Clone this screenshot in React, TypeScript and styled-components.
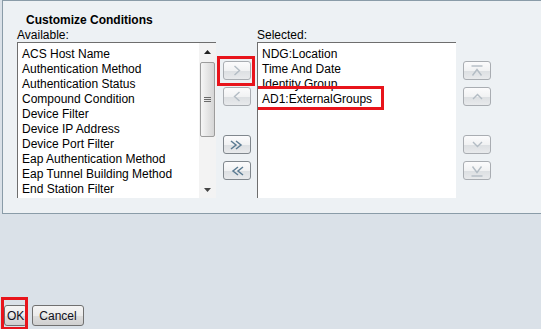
import styled, { createGlobalStyle } from 'styled-components';

const GlobalStyle = createGlobalStyle`
  html, body {
    margin: 0;
    padding: 0;
    background: #dae1e8;
  }
  body {
    width: 541px;
    height: 329px;
    overflow: hidden;
    font-family: 'Liberation Sans', Arial, sans-serif;
    font-size: 12px;
    color: #000;
  }
`;

const Page = styled.div`
  height: 329px;
  padding-left: 2px;
  box-sizing: border-box;
  display: flex;
  flex-direction: column;
`;

const Panel = styled.section`
  height: 214px;
  box-sizing: border-box;
  border: 1px solid #8a9ca8;
  border-right: none;
  background: #edf1f4;
  padding: 12px 0 0 14px;
`;

const Titulo = styled.h3`
  margin: 0 0 2px 9px;
  font-size: 12px;
  line-height: 14px;
  font-weight: 700;
`;

const Colunas = styled.div`
  display: flex;
  align-items: flex-start;
`;

const Coluna = styled.div`
  width: 199px;
  display: flex;
  flex-direction: column;
`;

const Rotulo = styled.div`
  line-height: 13px;
  height: 13px;
`;

const Lista = styled.div`
  height: 156px;
  box-sizing: border-box;
  background: #fff;
  border-top: 1px solid #6e6e6e;
  border-left: 1px solid #6e6e6e;
  display: flex;
`;

const Itens = styled.div`
  flex: 1;
  padding: 4px 0 0 4px;
  overflow: hidden;
`;

const Item = styled.div`
  line-height: 15px;
  white-space: nowrap;
`;

const ItemMarcado = styled(Item)`
  position: relative;
  width: fit-content;
  &::after {
    content: '';
    position: absolute;
    left: -10px;
    right: -12px;
    top: -6px;
    bottom: -3px;
    border: 3px solid #e8141b;
    pointer-events: none;
  }
`;

const Rolagem = styled.div`
  width: 17px;
  background: #f3f3f3;
  display: flex;
  flex-direction: column;
  align-items: center;
`;

const SetaRolagem = styled.div`
  height: 17px;
  width: 17px;
  display: flex;
  align-items: center;
  justify-content: center;
`;

const Polegar = styled.div`
  margin-top: 2px;
  width: 13px;
  height: 73px;
  border: 1px solid #9c9c9c;
  border-radius: 2px;
  background: linear-gradient(to right, #f6f6f6, #e2e2e2 60%, #d6d6d6);
  display: flex;
  align-items: center;
  justify-content: center;
`;

const Espaco = styled.div`
  flex: 1;
`;

const ColunaBotoes = styled.div<{ esquerda: number }>`
  margin-left: ${({ esquerda }) => esquerda}px;
  padding-top: 32px;
  display: flex;
  flex-direction: column;
  gap: 29px;
`;

const Grupo = styled.div`
  display: flex;
  flex-direction: column;
  gap: 7px;
`;

const BotaoSeta = styled.button<{ ativo?: boolean }>`
  width: 28px;
  height: 19px;
  padding: 0;
  box-sizing: border-box;
  border: 1px solid ${({ ativo }) => (ativo ? '#80878d' : '#a9adb2')};
  border-radius: 3px;
  background: linear-gradient(#fbfbfc 0%, #f1f2f3 50%, #dcdfe2 52%, #e8eaec 100%);
  color: ${({ ativo }) => (ativo ? '#5b7b92' : '#b3bcc4')};
  display: flex;
  align-items: center;
  justify-content: center;
  cursor: ${({ ativo }) => (ativo ? 'pointer' : 'default')};
`;

const Marcado = styled.div`
  position: relative;
  &::after {
    content: '';
    position: absolute;
    left: -6px;
    right: -4px;
    top: -5px;
    bottom: -6px;
    border: 3px solid #e8141b;
    pointer-events: none;
  }
`;

const Rodape = styled.div`
  margin-top: 91px;
  padding-left: 2px;
  display: flex;
  gap: 5px;
`;

const Botao = styled.button<{ folga: number }>`
  height: 21px;
  padding: 0 ${({ folga }) => folga}px;
  border: 1px solid #707070;
  border-radius: 3px;
  background: linear-gradient(#f4f4f4 0%, #ebebeb 50%, #dddddd 51%, #d0d0d0 100%);
  font-family: 'Liberation Sans', Arial, sans-serif;
  font-size: 12px;
  color: #0f1020;
`;

const BotaoMarcado = styled(Botao)`
  position: relative;
  &::after {
    content: '';
    position: absolute;
    left: -4px;
    right: -2px;
    top: -9px;
    bottom: -5px;
    border: 3px solid #e8141b;
    pointer-events: none;
  }
`;

const disponiveis = [
  'ACS Host Name',
  'Authentication Method',
  'Authentication Status',
  'Compound Condition',
  'Device Filter',
  'Device IP Address',
  'Device Port Filter',
  'Eap Authentication Method',
  'Eap Tunnel Building Method',
  'End Station Filter',
];

const selecionados = ['NDG:Location', 'Time And Date', 'Identity Group'];

function Chevron({ dir }: { dir: 'right' | 'left' | 'up' | 'down' }) {
  const pts = {
    right: '2.5,1 7.5,5.5 2.5,10',
    left: '7.5,1 2.5,5.5 7.5,10',
    up: '1,8 5.5,3.5 10,8',
    down: '1,3 5.5,7.5 10,3',
  }[dir];
  return (
    <svg width="11" height="11" viewBox="0 0 11 11">
      <polyline points={pts} fill="none" stroke="currentColor" strokeWidth="1.4" />
    </svg>
  );
}

function Dupla({ dir }: { dir: 'right' | 'left' }) {
  const a = dir === 'right' ? '1,1 6,5 1,9' : '13,1 8,5 13,9';
  const b = dir === 'right' ? '6,1 11,5 6,9' : '8,1 3,5 8,9';
  return (
    <svg width="14" height="10" viewBox="0 0 14 10">
      <polyline points={a} fill="none" stroke="currentColor" strokeWidth="1.5" />
      <polyline points={b} fill="none" stroke="currentColor" strokeWidth="1.5" />
    </svg>
  );
}

function Extremo({ dir }: { dir: 'top' | 'bottom' }) {
  return (
    <svg width="12" height="12" viewBox="0 0 12 12">
      {dir === 'top' ? (
        <>
          <line x1="0.5" y1="1" x2="11.5" y2="1" stroke="currentColor" strokeWidth="1.4" />
          <polyline points="1.5,10.5 6,4.5 10.5,10.5" fill="none" stroke="currentColor" strokeWidth="1.4" />
        </>
      ) : (
        <>
          <polyline points="1.5,1.5 6,7.5 10.5,1.5" fill="none" stroke="currentColor" strokeWidth="1.4" />
          <line x1="0.5" y1="11" x2="11.5" y2="11" stroke="currentColor" strokeWidth="1.4" />
        </>
      )}
    </svg>
  );
}

export default function App() {
  return (
    <>
      <GlobalStyle />
      <Page>
        <Panel>
          <Titulo>Customize Conditions</Titulo>
          <Colunas>
            <Coluna>
              <Rotulo>Available:</Rotulo>
              <Lista>
                <Itens>
                  {disponiveis.map((nome) => (
                    <Item key={nome}>{nome}</Item>
                  ))}
                </Itens>
                <Rolagem>
                  <SetaRolagem>
                    <svg width="7" height="4" viewBox="0 0 7 4">
                      <polygon points="0,4 3.5,0 7,4" fill="#222" />
                    </svg>
                  </SetaRolagem>
                  <Polegar>
                    <svg width="7" height="6" viewBox="0 0 7 6">
                      <line x1="0" y1="0.5" x2="7" y2="0.5" stroke="#6a6a6a" />
                      <line x1="0" y1="2.5" x2="7" y2="2.5" stroke="#6a6a6a" />
                      <line x1="0" y1="4.5" x2="7" y2="4.5" stroke="#6a6a6a" />
                    </svg>
                  </Polegar>
                  <Espaco />
                  <SetaRolagem>
                    <svg width="7" height="4" viewBox="0 0 7 4">
                      <polygon points="0,0 7,0 3.5,4" fill="#444" />
                    </svg>
                  </SetaRolagem>
                </Rolagem>
              </Lista>
            </Coluna>

            <ColunaBotoes esquerda={7}>
              <Grupo>
                <Marcado>
                  <BotaoSeta>
                    <Chevron dir="right" />
                  </BotaoSeta>
                </Marcado>
                <BotaoSeta>
                  <Chevron dir="left" />
                </BotaoSeta>
              </Grupo>
              <Grupo>
                <BotaoSeta ativo>
                  <Dupla dir="right" />
                </BotaoSeta>
                <BotaoSeta ativo>
                  <Dupla dir="left" />
                </BotaoSeta>
              </Grupo>
            </ColunaBotoes>

            <Coluna style={{ marginLeft: 6 }}>
              <Rotulo>Selected:</Rotulo>
              <Lista>
                <Itens>
                  {selecionados.map((nome) => (
                    <Item key={nome}>{nome}</Item>
                  ))}
                  <ItemMarcado>AD1:ExternalGroups</ItemMarcado>
                </Itens>
              </Lista>
            </Coluna>

            <ColunaBotoes esquerda={7}>
              <Grupo>
                <BotaoSeta>
                  <Extremo dir="top" />
                </BotaoSeta>
                <BotaoSeta>
                  <Chevron dir="up" />
                </BotaoSeta>
              </Grupo>
              <Grupo>
                <BotaoSeta>
                  <Chevron dir="down" />
                </BotaoSeta>
                <BotaoSeta>
                  <Extremo dir="bottom" />
                </BotaoSeta>
              </Grupo>
            </ColunaBotoes>
          </Colunas>
        </Panel>
        <Rodape>
          <BotaoMarcado folga={2}>OK</BotaoMarcado>
          <Botao folga={6}>Cancel</Botao>
        </Rodape>
      </Page>
    </>
  );
}
